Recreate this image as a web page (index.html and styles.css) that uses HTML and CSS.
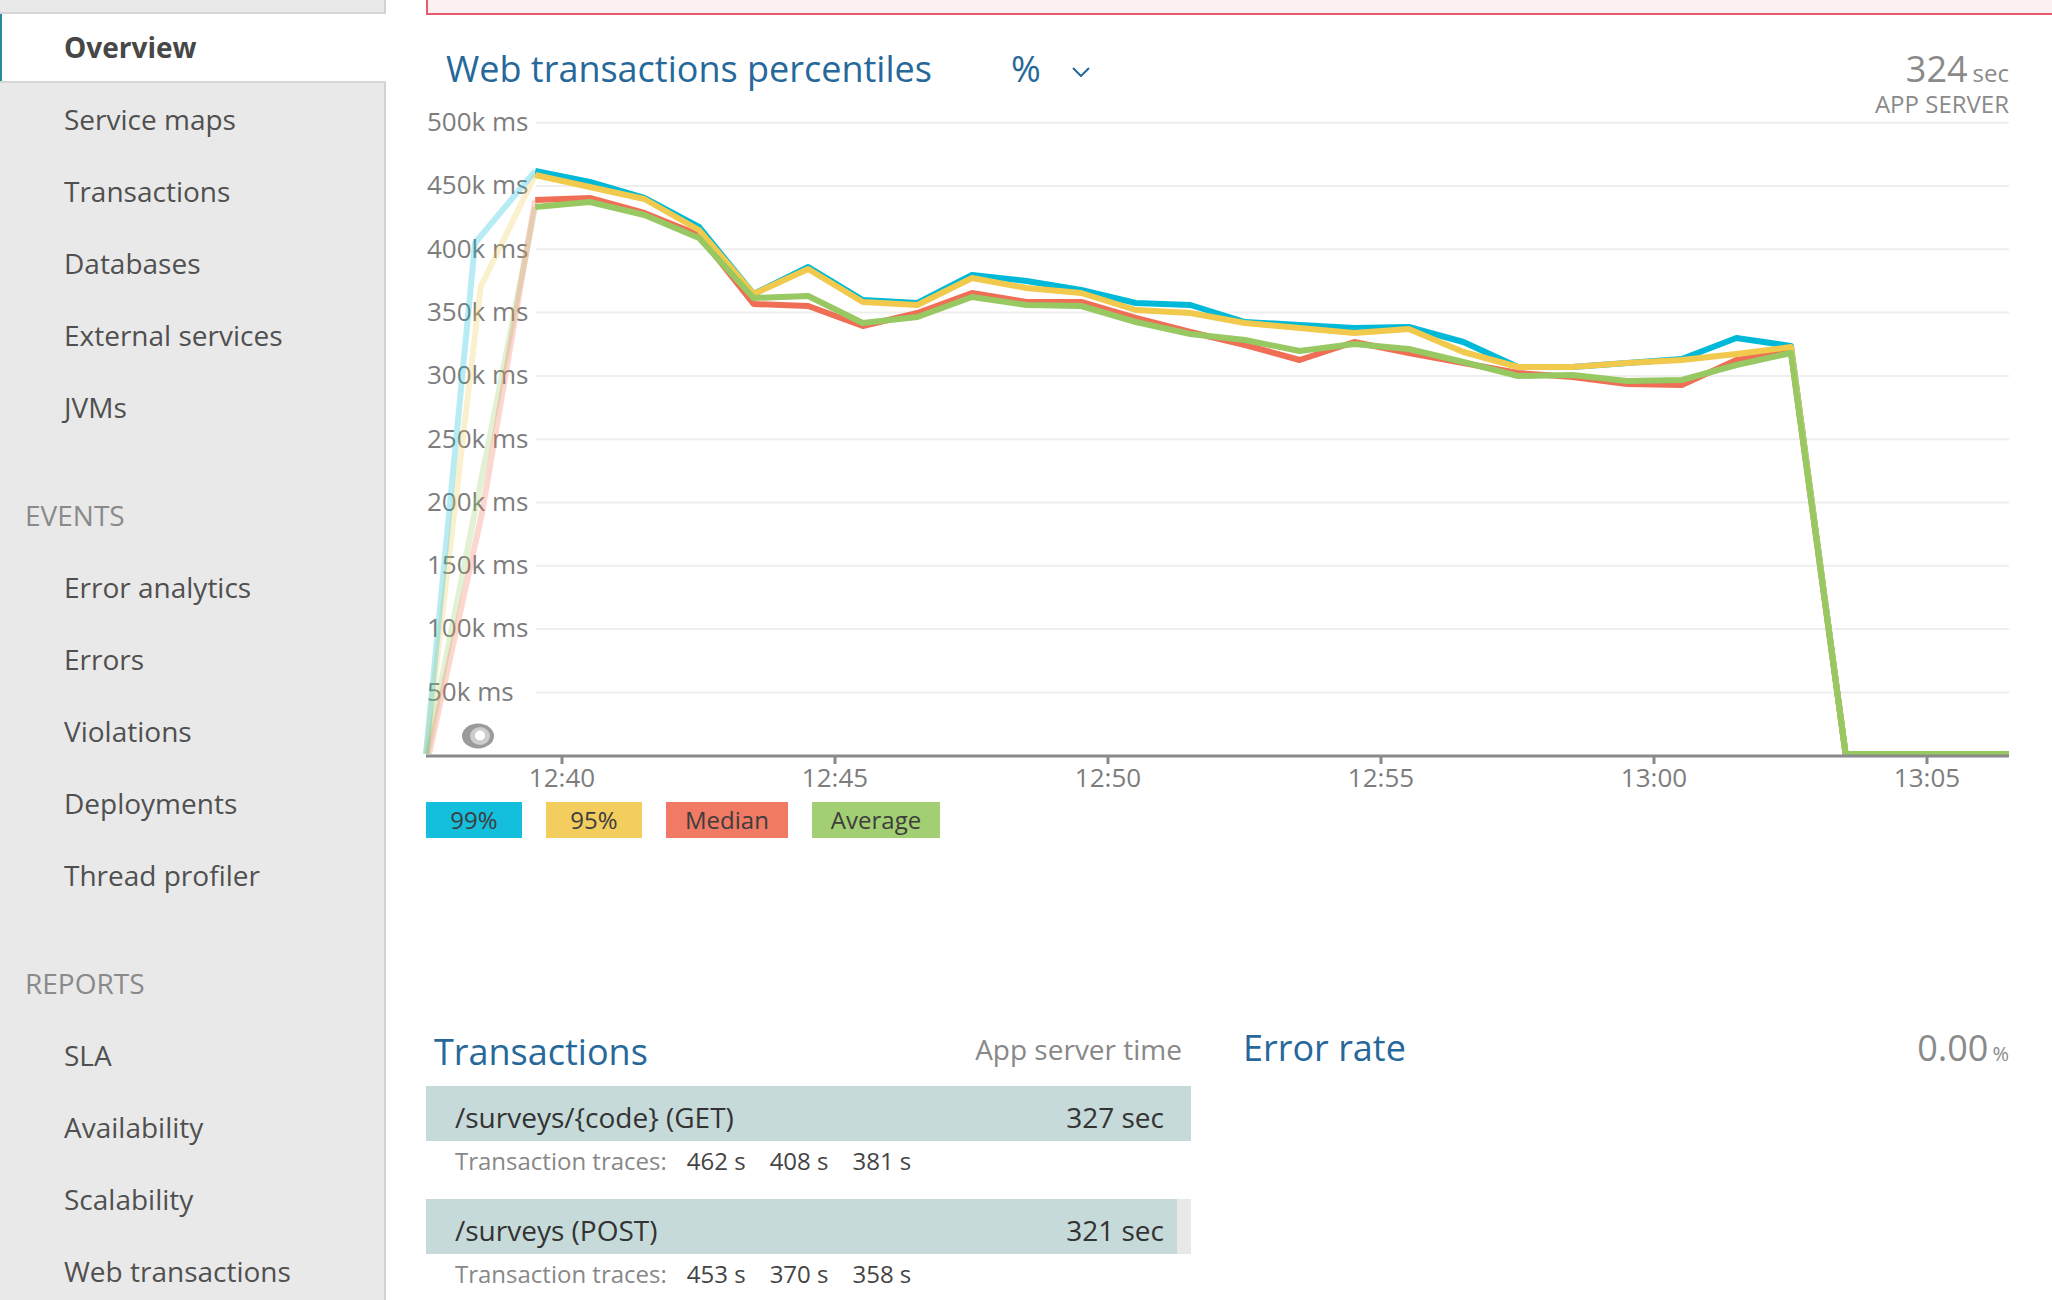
FILE: index.html
```html
<!DOCTYPE html>
<html lang="en">
<head>
<meta charset="utf-8">
<title>Overview</title>
<link rel="stylesheet" href="styles.css">
</head>
<body>
<div class="page">
  <nav class="sidebar">
    <div class="nav-stub"></div>
    <a class="nav-item active">Overview</a>
    <a class="nav-item">Service maps</a>
    <a class="nav-item">Transactions</a>
    <a class="nav-item">Databases</a>
    <a class="nav-item">External services</a>
    <a class="nav-item">JVMs</a>
    <div class="nav-section">EVENTS</div>
    <a class="nav-item">Error analytics</a>
    <a class="nav-item">Errors</a>
    <a class="nav-item">Violations</a>
    <a class="nav-item">Deployments</a>
    <a class="nav-item">Thread profiler</a>
    <div class="nav-section">REPORTS</div>
    <a class="nav-item">SLA</a>
    <a class="nav-item">Availability</a>
    <a class="nav-item">Scalability</a>
    <a class="nav-item">Web transactions</a>
  </nav>

  <main class="main">
    <div class="alert-banner"></div>

    <section class="chart-card">
      <header class="chart-head">
        <div class="chart-title-group">
          <h2 class="chart-title">Web transactions percentiles</h2>
          <span class="pct">%</span>
          <svg class="chevron" width="18" height="10" viewBox="0 0 18 10"><polyline points="1,1 9,9 17,1" fill="none" stroke="#26689a" stroke-width="2"/></svg>
        </div>
        <div class="chart-summary">
          <div class="summary-value">324<span class="unit">sec</span></div>
          <div class="summary-label">APP SERVER</div>
        </div>
      </header>

      <svg class="chart" width="1583" height="700" viewBox="426 100 1583 700">
        <g class="grid">
          <line x1="536" y1="122.7" x2="2009" y2="122.7"/>
          <line x1="536" y1="186" x2="2009" y2="186"/>
          <line x1="536" y1="249.3" x2="2009" y2="249.3"/>
          <line x1="536" y1="312.6" x2="2009" y2="312.6"/>
          <line x1="536" y1="375.9" x2="2009" y2="375.9"/>
          <line x1="536" y1="439.2" x2="2009" y2="439.2"/>
          <line x1="536" y1="502.5" x2="2009" y2="502.5"/>
          <line x1="536" y1="565.8" x2="2009" y2="565.8"/>
          <line x1="536" y1="629.1" x2="2009" y2="629.1"/>
          <line x1="536" y1="692.4" x2="2009" y2="692.4"/>
        </g>
        <g class="ylabels">
          <text x="427" y="131">500k ms</text>
          <text x="427" y="194.3">450k ms</text>
          <text x="427" y="257.6">400k ms</text>
          <text x="427" y="320.9">350k ms</text>
          <text x="427" y="384.2">300k ms</text>
          <text x="427" y="447.5">250k ms</text>
          <text x="427" y="510.8">200k ms</text>
          <text x="427" y="574.1">150k ms</text>
          <text x="427" y="637.4">100k ms</text>
          <text x="427" y="700.7">50k ms</text>
        </g>

        <g class="faded">
          <polyline class="s-green" points="427,754 535.2,207"/>
          <polyline class="s-red" points="429,754 482,513 535.2,200"/>
          <polyline class="s-yellow" points="426,754 480.6,287 535.2,175"/>
          <polyline class="s-blue" points="426,754 475,243 535.2,171"/>
        </g>
        <g class="series">
          <polyline class="s-blue" points="535.2,171 589.8,182 644.4,198 699,227 753.6,294 808.2,267 862.8,300 917.4,303 972,275 1026.6,281 1081.2,290 1135.8,303 1190.4,305 1245,322 1299.6,325 1354.2,328 1408.8,327 1463.4,342 1518,367 1572.6,367 1627.2,363 1681.8,359 1736.4,338 1791,346 1845.6,754 2009,754"/>
          <polyline class="s-red" points="535.2,200 589.8,198 644.4,213 699,235 753.6,304 808.2,306 862.8,326 917.4,313 972,293 1026.6,302 1081.2,302 1135.8,318 1190.4,332 1245,345 1299.6,360 1354.2,342 1408.8,353 1463.4,363 1518,373 1572.6,377 1627.2,384 1681.8,385 1736.4,360 1791,352 1845.6,754 2009,754"/>
          <polyline class="s-yellow" points="535.2,175 589.8,187 644.4,199 699,230 753.6,294 808.2,269 862.8,302 917.4,305 972,278 1026.6,288 1081.2,293 1135.8,310 1190.4,313 1245,323 1299.6,328 1354.2,333 1408.8,329 1463.4,352 1518,367 1572.6,367 1627.2,363 1681.8,360 1736.4,354 1791,347 1845.6,754 2009,754"/>
          <polyline class="s-green" points="535.2,207 589.8,202 644.4,215 699,238 753.6,298 808.2,296 862.8,323 917.4,317 972,297 1026.6,305 1081.2,306 1135.8,322 1190.4,334 1245,340 1299.6,351 1354.2,344 1408.8,349 1463.4,362 1518,376 1572.6,375 1627.2,381 1681.8,380 1736.4,365 1791,353 1845.6,754 2009,754"/>
        </g>

        <g class="axis">
          <line x1="426" y1="756" x2="2009" y2="756"/>
          <line x1="562" y1="756" x2="562" y2="764"/>
          <line x1="835" y1="756" x2="835" y2="764"/>
          <line x1="1108" y1="756" x2="1108" y2="764"/>
          <line x1="1381" y1="756" x2="1381" y2="764"/>
          <line x1="1654" y1="756" x2="1654" y2="764"/>
          <line x1="1927" y1="756" x2="1927" y2="764"/>
        </g>
        <g class="xlabels">
          <text x="562" y="787">12:40</text>
          <text x="835" y="787">12:45</text>
          <text x="1108" y="787">12:50</text>
          <text x="1381" y="787">12:55</text>
          <text x="1654" y="787">13:00</text>
          <text x="1927" y="787">13:05</text>
        </g>

        <g class="marker">
          <ellipse cx="478" cy="736" rx="16" ry="12.5" fill="#9b9b9b"/>
          <ellipse cx="480" cy="736" rx="10" ry="9" fill="#cdcdcd"/>
          <ellipse cx="480" cy="735.5" rx="5" ry="5" fill="#ffffff"/>
        </g>
      </svg>

      <ul class="legend">
        <li class="legend-item l-blue">99%</li>
        <li class="legend-item l-yellow">95%</li>
        <li class="legend-item l-red">Median</li>
        <li class="legend-item l-green">Average</li>
      </ul>
    </section>

    <section class="bottom-grid">
      <div class="txn-col">
        <div class="col-head txn-head">
          <h3 class="col-title">Transactions</h3>
          <span class="col-meta">App server time</span>
        </div>
        <div class="txn-row">
          <div class="bar">
            <div class="bar-fill" style="width:100%"></div>
            <span class="bar-name">/surveys/{code} (GET)</span>
            <span class="bar-value">327 sec</span>
          </div>
          <div class="traces">
            <span class="traces-label">Transaction traces:</span>
            <span class="trace">462 s</span>
            <span class="trace">408 s</span>
            <span class="trace">381 s</span>
          </div>
        </div>
        <div class="txn-row">
          <div class="bar">
            <div class="bar-fill" style="width:98.2%"></div>
            <span class="bar-name">/surveys (POST)</span>
            <span class="bar-value">321 sec</span>
          </div>
          <div class="traces">
            <span class="traces-label">Transaction traces:</span>
            <span class="trace">453 s</span>
            <span class="trace">370 s</span>
            <span class="trace">358 s</span>
          </div>
        </div>
      </div>

      <div class="err-col">
        <div class="col-head err-head">
          <h3 class="col-title">Error rate</h3>
          <span class="err-value">0.00<span class="err-unit">%</span></span>
        </div>
      </div>
    </section>
  </main>
</div>
</body>
</html>
```

FILE: styles.css
```css
* { box-sizing: border-box; }

html, body {
  margin: 0;
  padding: 0;
  background: #ffffff;
}

body {
  font-family: "Open Sans", "DejaVu Sans", sans-serif;
  overflow: hidden;
}

.page {
  display: flex;
  width: 2052px;
  height: 1300px;
  overflow: hidden;
}

/* ---------- sidebar ---------- */
.sidebar {
  display: block;
  width: 386px;
  flex-shrink: 0;
  background: #e9e9e9;
  border-right: 2px solid #d2d2d2;
}

.nav-stub {
  height: 14px;
  border-bottom: 2px solid #d6d6d6;
}

.nav-item {
  display: block;
  height: 72px;
  line-height: 72px;
  padding-left: 64px;
  font-size: 28px;
  color: #505050;
  text-decoration: none;
  white-space: nowrap;
}

.nav-item.active {
  height: 69px;
  line-height: 67px;
  background: #ffffff;
  border-bottom: 2px solid #d6d6d6;
  margin-right: -2px;
  font-weight: 700;
  color: #474747;
  box-shadow: inset 2px 0 0 #2a8a9c;
  position: relative;
}

.nav-section {
  margin-top: 36px;
  height: 72px;
  line-height: 72px;
  padding-left: 25px;
  font-size: 28px;
  color: #8a8a8a;
}

/* ---------- main ---------- */
.main {
  flex: 1;
  min-width: 0;
  padding: 0 43px 0 40px;
  display: block;
}

.alert-banner {
  height: 15px;
  background: #fdf0f2;
  border: 2px solid #e95b6c;
  border-top: none;
  border-right: none;
  margin-right: -43px;
}

.chart-head {
  margin-top: 28px;
  height: 57px;
  display: flex;
  justify-content: space-between;
  align-items: flex-start;
}

.chart-title-group {
  display: flex;
  align-items: center;
  padding-left: 20px;
  padding-top: 2px;
}

.chart-title {
  margin: 0;
  font-size: 36px;
  line-height: 48px;
  font-weight: 400;
  color: #26689a;
}

.pct {
  margin-left: 79px;
  font-size: 36px;
  line-height: 48px;
  color: #26689a;
}

.chevron {
  margin-left: 31px;
  margin-top: 6px;
  display: block;
}

.chart-summary {
  text-align: right;
  color: #8a8a8a;
  padding-top: 7px;
}

.summary-value {
  font-size: 36px;
  line-height: 38px;
}

.unit {
  font-size: 24px;
  line-height: 20px;
  margin-left: 5px;
}

.summary-label {
  font-size: 24px;
  line-height: 32px;
}

.chart {
  display: block;
  overflow: visible;
}

.chart .grid line {
  stroke: #eeeeee;
  stroke-width: 2;
}

.chart text {
  font-family: "Open Sans", "DejaVu Sans", sans-serif;
  font-size: 26px;
  fill: #7d7d7d;
}

.chart .xlabels text {
  text-anchor: middle;
}

.chart polyline {
  fill: none;
  stroke-width: 6;
  stroke-linejoin: round;
  stroke-linecap: butt;
}

.chart .faded polyline {
  stroke-opacity: 0.28;
}

.s-blue { stroke: #00b9d8; }
.s-yellow { stroke: #f0c94d; }
.s-red { stroke: #ef6e55; }
.s-green { stroke: #97c862; }

.chart .axis line {
  stroke: #8a8a8a;
  stroke-width: 3;
}

.legend {
  list-style: none;
  margin: 2px 0 0 0;
  padding: 0;
  display: flex;
  gap: 24px;
}

.legend-item {
  height: 36px;
  line-height: 36px;
  min-width: 96px;
  padding: 0 19px;
  text-align: center;
  font-size: 24px;
  color: #3d3d3d;
}

.l-blue { background: #14bedd; }
.l-yellow { background: #f3cd5e; }
.l-red { background: #f07a64; }
.l-green { background: #a3cf73; }

/* ---------- bottom ---------- */
.bottom-grid {
  margin-top: 190px;
  display: grid;
  grid-template-columns: 765px 1fr;
  column-gap: 44px;
}

.col-head {
  display: flex;
  justify-content: space-between;
  align-items: flex-start;
  height: 48px;
  padding-left: 8px;
}

.txn-head {
  margin-bottom: 10px;
}

.col-title {
  margin: 0;
  font-size: 36px;
  line-height: 48px;
  font-weight: 400;
  color: #26689a;
}

.col-meta {
  margin-top: 2px;
  padding-right: 9px;
  font-size: 28px;
  line-height: 38px;
  color: #888888;
}

.txn-row {
  margin-bottom: 20px;
}

.bar {
  position: relative;
  height: 55px;
  background: #e8e8e8;
  display: flex;
  justify-content: space-between;
  padding: 8px 27px 0 29px;
  line-height: 47px;
  font-size: 28px;
  color: #333333;
}

.bar-fill {
  position: absolute;
  left: 0;
  top: 0;
  bottom: 0;
  background: #c6dad9;
}

.bar-name,
.bar-value {
  position: relative;
}

.traces {
  margin-top: 2px;
  padding-left: 29px;
  display: flex;
  gap: 24px;
  font-size: 24px;
  line-height: 36px;
  color: #444444;
}

.traces-label {
  color: #888888;
  margin-right: -4px;
}

.err-head {
  margin-top: -4px;
  align-items: baseline;
}

.err-value {
  font-size: 36px;
  line-height: 48px;
  color: #8a8a8a;
}

.err-unit {
  font-size: 20px;
  margin-left: 4px;
}
```
